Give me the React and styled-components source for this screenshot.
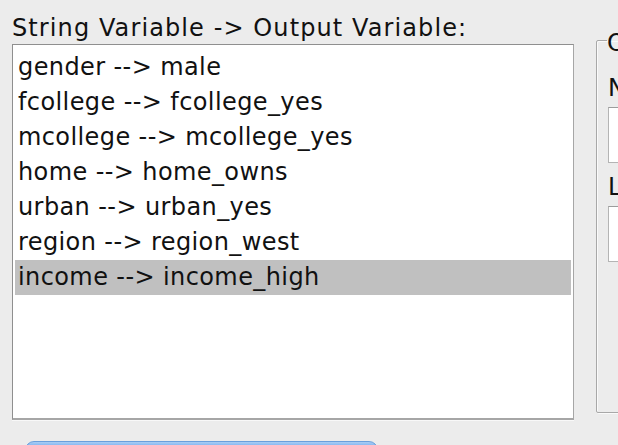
import styled, { createGlobalStyle } from 'styled-components'

const GlobalStyle = createGlobalStyle`
  html, body {
    margin: 0;
    padding: 0;
    background: #ececec;
    overflow: hidden;
  }
  body {
    font-family: "DejaVu Sans", "Liberation Sans", sans-serif;
    color: #111;
  }
`

const Page = styled.div`
  width: 618px;
  height: 445px;
  overflow: hidden;
  display: grid;
  grid-template-columns: 562px 300px;
  column-gap: 22px;
  padding-left: 12px;
  box-sizing: border-box;
`

const LeftColumn = styled.div`
  display: flex;
  flex-direction: column;
`

const Caption = styled.div`
  font-size: 24px;
  letter-spacing: 1.1px;
  line-height: 26px;
  height: 26px;
  padding-top: 15px;
  margin-bottom: 3px;
  white-space: nowrap;
`

const ListBox = styled.div`
  height: 376px;
  box-sizing: border-box;
  background: #fff;
  border: 1px solid #8f8f8f;
  border-right-color: #a6a6a6;
  border-bottom: 2px solid #a6a6a6;
  box-shadow: 0 1px 0 #f8f8f8;
  padding: 5px 2px;
  display: flex;
  flex-direction: column;
`

const Row = styled.div`
  height: 35px;
  line-height: 35px;
  padding-left: 3px;
  font-size: 24px;
  letter-spacing: 0.4px;
  white-space: nowrap;
  background: ${({ $selected }) => ($selected ? '#c0c0c0' : 'transparent')};
`

const PrimaryButton = styled.button`
  margin: 21px 0 0 13px;
  width: 353px;
  height: 40px;
  border: 1px solid #6a9fdc;
  border-radius: 9px;
  background: linear-gradient(#a9cdf4 0%, #6eaaf0 15%, #3f8ae6 100%);
  font: inherit;
  font-size: 24px;
  color: #fff;
`

const GroupBox = styled.fieldset`
  margin: 0;
  margin-top: 29px;
  height: 384px;
  box-sizing: border-box;
  border: 1px solid #a8a8a8;
  box-shadow: inset 1px 1px 0 #fafafa, 1px 1px 0 #fafafa;
  border-radius: 2px;
  padding: 0 0 0 11px;
  display: flex;
  flex-direction: column;
`

const GroupTitle = styled.legend`
  font-size: 24px;
  line-height: 22px;
  padding: 0 2px 0 0;
  margin-left: -1px;
  position: relative;
  top: 3px;
`

const FieldLabel = styled.div`
  font-size: 24px;
  line-height: 24px;
  margin-top: ${({ $first }) => ($first ? '25px' : '12px')};
  margin-bottom: 7px;
`

const TextField = styled.div`
  width: 260px;
  height: 56px;
  box-sizing: border-box;
  background: #fff;
  border: 1px solid #b4b4b4;
  border-top-color: #9c9c9c;
`

const mappings = [
  ['gender', 'male'],
  ['fcollege', 'fcollege_yes'],
  ['mcollege', 'mcollege_yes'],
  ['home', 'home_owns'],
  ['urban', 'urban_yes'],
  ['region', 'region_west'],
  ['income', 'income_high'],
]

export default function App() {
  return (
    <>
      <GlobalStyle />
      <Page>
        <LeftColumn>
          <Caption>String Variable -&gt; Output Variable:</Caption>
          <ListBox>
            {mappings.map(([from, to], i) => (
              <Row key={from} $selected={i === mappings.length - 1}>
                {from} --&gt; {to}
              </Row>
            ))}
          </ListBox>
          <PrimaryButton>Add</PrimaryButton>
        </LeftColumn>
        <GroupBox>
          <GroupTitle>Output</GroupTitle>
          <FieldLabel $first>Name:</FieldLabel>
          <TextField />
          <FieldLabel>Label:</FieldLabel>
          <TextField />
        </GroupBox>
      </Page>
    </>
  )
}
